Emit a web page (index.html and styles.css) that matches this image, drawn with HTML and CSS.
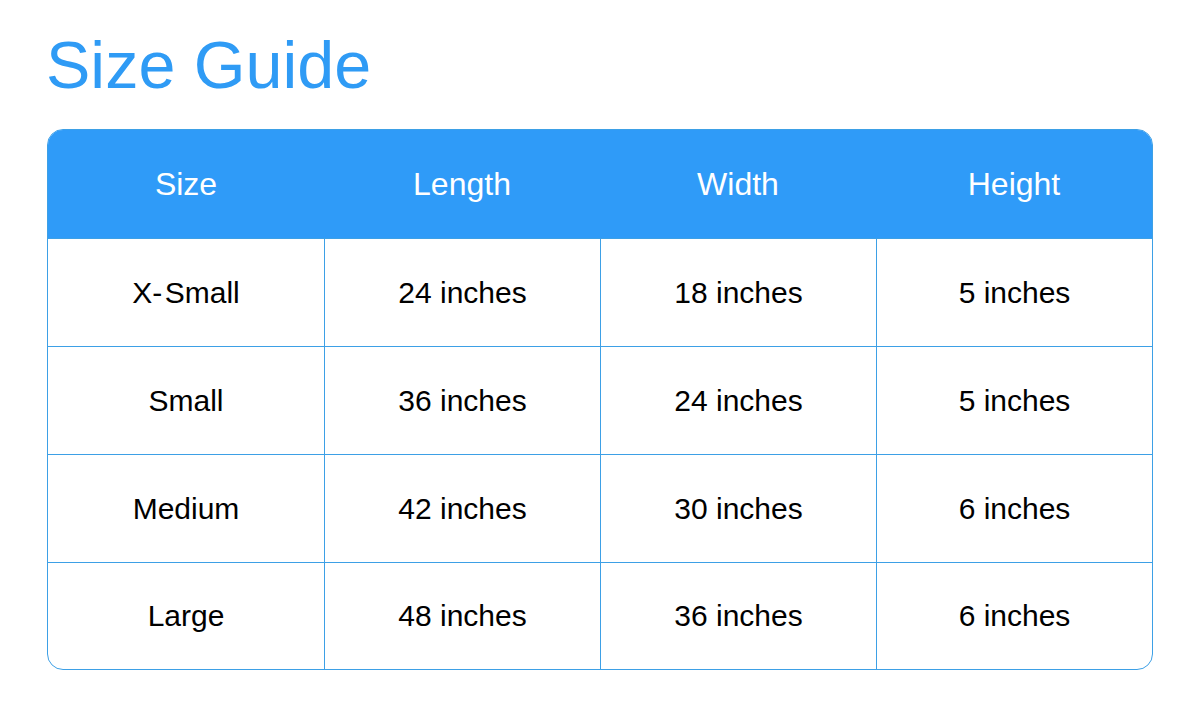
FILE: index.html
```html
<!DOCTYPE html>
<html>
<head>
<meta charset="utf-8">
<link rel="stylesheet" href="styles.css">
</head>
<body>
<h1 class="title">Size Guide</h1>
<div class="table">
  <div class="head">
    <div class="hcell">Size</div>
    <div class="hcell">Length</div>
    <div class="hcell">Width</div>
    <div class="hcell">Height</div>
  </div>
  <div class="row">
    <div class="cell">X-&#8202;Small</div>
    <div class="cell">24 inches</div>
    <div class="cell">18 inches</div>
    <div class="cell">5 inches</div>
  </div>
  <div class="row">
    <div class="cell">Small</div>
    <div class="cell">36 inches</div>
    <div class="cell">24 inches</div>
    <div class="cell">5 inches</div>
  </div>
  <div class="row">
    <div class="cell">Medium</div>
    <div class="cell">42 inches</div>
    <div class="cell">30 inches</div>
    <div class="cell">6 inches</div>
  </div>
  <div class="row last">
    <div class="cell">Large</div>
    <div class="cell">48 inches</div>
    <div class="cell">36 inches</div>
    <div class="cell">6 inches</div>
  </div>
</div>
</body>
</html>
```
FILE: styles.css
```css
html, body {
  margin: 0;
  padding: 0;
  background: #ffffff;
}
body {
  font-family: "Liberation Sans", Arial, sans-serif;
  padding: 25px 47px 0 47px;
}
.title {
  margin: 0 0 24px -1px;
  font-size: 66.5px;
  line-height: 80px;
  font-weight: normal;
  color: #2f9bf5;
}
.table {
  width: 1106px;
  box-sizing: border-box;
  border: 1px solid #3da0e6;
  border-radius: 16px;
  overflow: hidden;
}
.head {
  display: grid;
  grid-template-columns: repeat(4, 1fr);
  height: 108px;
  background: #2f9bf8;
}
.hcell {
  display: flex;
  align-items: center;
  justify-content: center;
  color: #ffffff;
  font-size: 32px;
}
.row {
  display: grid;
  grid-template-columns: repeat(4, 1fr);
  height: 107px;
  border-top: 1px solid #3da0e6;
}
.row.last {
  height: 106px;
}
.cell {
  display: flex;
  align-items: center;
  justify-content: center;
  font-size: 30px;
  color: #000000;
  border-left: 1px solid #3da0e6;
}
.cell:first-child {
  border-left: none;
}
```
